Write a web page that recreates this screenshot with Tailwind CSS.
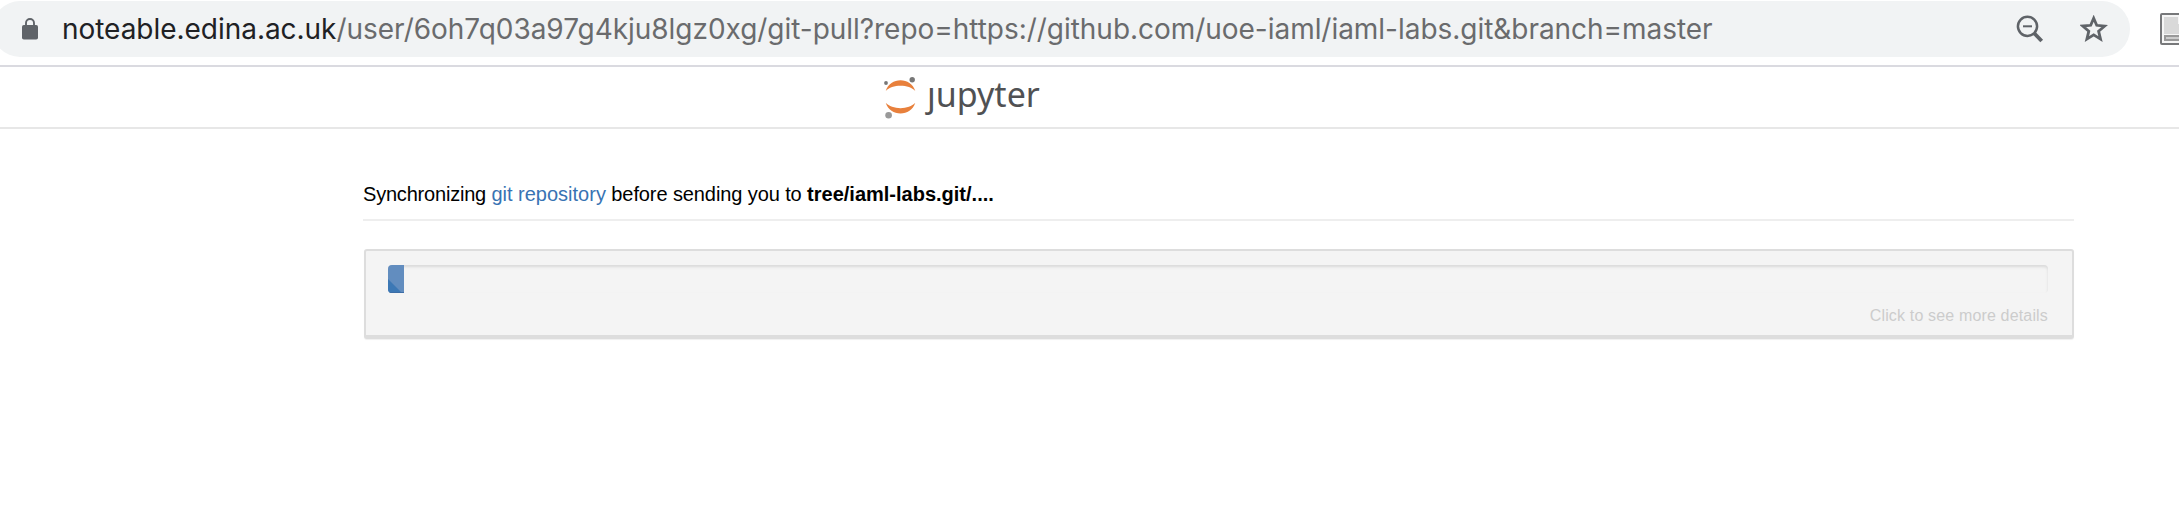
<!DOCTYPE html>
<html lang="en">
<head>
<meta charset="utf-8">
<title>Jupyter</title>
<script src="https://cdn.jsdelivr.net/npm/@tailwindcss/browser@4"></script>
</head>
<body class="h-[532px] overflow-hidden bg-white font-['Liberation_Sans',sans-serif] text-black">
  <div class="flex h-[65px] overflow-hidden pt-px">
    <div class="-ml-2 flex h-14 w-[2138px] shrink-0 items-center rounded-full bg-[#f1f3f4]">
      <svg class="ml-[30px] h-[22px] w-4 shrink-0" viewBox="0 0 16 22"><rect y="7" width="16" height="14.5" rx="1.8" fill="#5f6368"/><path d="M4 8V5a4 4 0 0 1 8 0v3" fill="none" stroke="#5f6368" stroke-width="1.9"/></svg>
      <div class="ml-6 w-[1954px] shrink-0 whitespace-nowrap font-['Inter',sans-serif] text-[28px] leading-[56px] tracking-[-0.035px] text-[#6a6b6d]"><span class="text-[#202124]">noteable.edina.ac.uk</span><span>/user/6oh7q03a97g4kju8lgz0xg/git-pull?repo=https://github.com/uoe-iaml/iaml-labs.git&amp;branch=master</span></div>
      <svg class="h-7 w-7 shrink-0" viewBox="0 0 28 28" fill="none" stroke="#5f6368"><circle cx="11.5" cy="11.3" r="9.6" stroke-width="2.5"/><path d="M7 11.3h9" stroke-width="2"/><path d="M18 18l7.700 8" stroke-width="3.800"/></svg>
      <svg class="ml-9 h-7 w-7 shrink-0" viewBox="0 0 28 28" fill="none" stroke="#5f6368" stroke-width="2.800"><path d="M13.700 3.200l3 7.100 8 .7-6.100 5.200 1.900 7.900-6.800-4.200-6.800 4.200 1.900-7.900-6.100-5.200 8-.7z"/></svg>
    </div>
    <svg class="ml-[30px] mt-3 h-8 w-[19px] shrink-0" viewBox="0 0 19 32"><rect x="1" y="1" width="30" height="30" rx="1" fill="#f6f6f6" stroke="#77787a" stroke-width="2"/><path d="M4 4h14v7h1v10H4z" fill="#d9d9d9"/><path d="M4 22h15v6H4z" fill="#999"/><path d="M6 24h13v2H6z" fill="#ccc"/></svg>
  </div>
  <header class="h-16 border-y-2 border-t-[#dadae0] border-b-[#e7e7e7] pl-[884px]">
    <div class="flex h-[60px] items-center">
      <svg class="h-[60px] w-[34px] shrink-0" viewBox="884 67 34 60"><path d="M885.700 91C888 84 894 80.300 900.500 80.300S913 84 915.300 91C912 87.500 906.500 85.700 900.500 85.700S889 87.500 885.700 91zM885.700 102.800C888 109.800 894 113.500 900.500 113.500S913 109.800 915.300 102.800C912 106.300 906.500 108.200 900.500 108.200S889 106.300 885.700 102.800z" fill="#e8803c"/><circle cx="886" cy="83" r="1.900" fill="#777"/><circle cx="912.200" cy="79.700" r="2.700" fill="#777"/><circle cx="888.600" cy="115.200" r="3.300" fill="#999"/></svg>
      <span class="ml-[9px] -mt-[7px] font-['Noto_Sans',sans-serif] text-[34px] leading-none text-[#505153]">ȷupyter</span>
    </div>
  </header>
  <main class="ml-[363px] w-[1711px]">
    <div class="h-[92px] whitespace-nowrap border-b-2 border-[#eee] pt-[51px] text-[20px] leading-[28px]"><span class="tracking-[-0.2px]">Synchronizing </span><a class="text-[#3873b3]">git repository</a><span class="tracking-[-0.1px]"> before sending you to </span><b>tree/iaml-labs.git/....</b></div>
    <section class="ml-px mt-7 h-[90px] rounded-[3px] border-2 border-b-4 border-[#ddd] bg-[#f4f4f4] px-[22px] pt-3.5 shadow-[0_1px_1px_#00000010]">
      <div class="h-7 w-[1660px] overflow-hidden rounded-[4px] bg-[#f4f4f4] shadow-[inset_0_2px_3px_#0000001c]">
        <svg class="block h-7 w-4" viewBox="0 0 16 28"><path d="M0 0h16v28H0z" fill="#628dbf"/><path d="M0 14l14 14H0z" fill="#3c78b5"/><path d="M0 27h16v1H0z" fill="#3c6da6"/></svg>
      </div>
      <div class="mt-[11px] w-[1660px] text-right text-[16px] leading-6 tracking-[0.16px] text-[#ccc]"><span>Click to see more details</span></div>
    </section>
  </main>
</body>
</html>
